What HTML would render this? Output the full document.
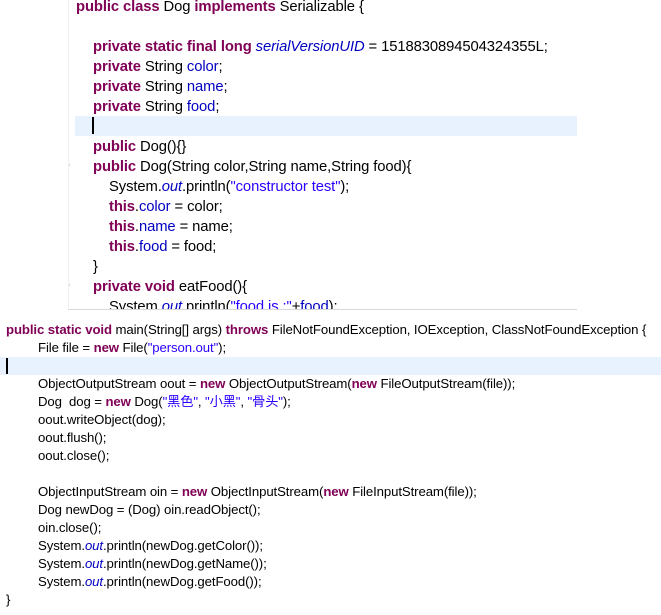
<!DOCTYPE html>
<html><head><meta charset="utf-8"><style>
html,body{margin:0;padding:0;background:#fff;width:661px;height:615px;overflow:hidden;position:relative}
.top{position:absolute;left:68px;top:0;width:508px;height:309px;overflow:hidden;border-left:1px solid #f0f0f0;border-bottom:1px solid #d8d8d8;font-family:"Liberation Sans",sans-serif;font-size:14.8px;letter-spacing:-0.1px;color:#000}
.bot{position:absolute;left:0;top:318px;width:661px;height:297px;font-family:"Liberation Sans","Noto Sans CJK SC",sans-serif;font-size:13.2px;letter-spacing:-0.1px;color:#000}
.l{position:absolute;white-space:pre;line-height:18px}
.k{color:#7f0055;font-weight:bold}
.f{color:#0000c0}
.s{color:#2a00ff}
.i{font-style:italic;color:#0000c0}
.hl{position:absolute;background:#e8f2fe}
.car{position:absolute;width:2px;background:#000}
.m{position:absolute;color:#aab;font-size:10px}
</style></head><body>
<div class="top">
<div class="hl" style="left:6px;top:116px;width:502px;height:20px"></div>
<div class="car" style="left:23px;top:117px;height:17px"></div>
<div class="l" style="left:7px;top:-2px"><span class="k">public class</span> Dog <span class="k">implements</span> Serializable {</div>
<div class="l" style="left:24px;top:38px"><span class="k">private static final long</span> <span class="i">serialVersionUID</span> = 1518830894504324355L;</div>
<div class="l" style="left:24px;top:58px"><span class="k">private</span> String <span class="f">color</span>;</div>
<div class="l" style="left:24px;top:78px"><span class="k">private</span> String <span class="f">name</span>;</div>
<div class="l" style="left:24px;top:98px"><span class="k">private</span> String <span class="f">food</span>;</div>
<div class="l" style="left:24px;top:138px"><span class="k">public</span> Dog(){}</div>
<div class="m" style="left:-2px;top:160px">&#9702;</div>
<div class="l" style="left:24px;top:158px"><span class="k">public</span> Dog(String color,String name,String food){</div>
<div class="l" style="left:40px;top:178px">System.<span class="i">out</span>.println(<span class="s">"constructor test"</span>);</div>
<div class="l" style="left:40px;top:198px"><span class="k">this</span>.<span class="f">color</span> = color;</div>
<div class="l" style="left:40px;top:218px"><span class="k">this</span>.<span class="f">name</span> = name;</div>
<div class="l" style="left:40px;top:238px"><span class="k">this</span>.<span class="f">food</span> = food;</div>
<div class="l" style="left:24px;top:258px">}</div>
<div class="m" style="left:-2px;top:280px">&#9702;</div>
<div class="l" style="left:24px;top:278px"><span class="k">private void</span> eatFood(){</div>
<div class="l" style="left:40px;top:298px">System.<span class="i">out</span>.println(<span class="s">"food is :"</span>+<span class="f">food</span>);</div>
</div>
<div class="bot">
<div class="hl" style="left:0;top:39px;width:661px;height:18px"></div>
<div class="car" style="left:6px;top:40px;height:16px"></div>
<div class="l" style="left:6px;top:3px"><span class="k">public static void</span> main(String[] args) <span class="k">throws</span> FileNotFoundException, IOException, ClassNotFoundException {</div>
<div class="l" style="left:38px;top:21px">File file = <span class="k">new</span> File(<span class="s">"person.out"</span>);</div>
<div class="l" style="left:38px;top:57px">ObjectOutputStream oout = <span class="k">new</span> ObjectOutputStream(<span class="k">new</span> FileOutputStream(file));</div>
<div class="l" style="left:38px;top:75px">Dog&nbsp; dog = <span class="k">new</span> Dog(<span class="s">"黑色"</span>, <span class="s">"小黑"</span>, <span class="s">"骨头"</span>);</div>
<div class="l" style="left:38px;top:93px">oout.writeObject(dog);</div>
<div class="l" style="left:38px;top:111px">oout.flush();</div>
<div class="l" style="left:38px;top:129px">oout.close();</div>
<div class="l" style="left:38px;top:165px">ObjectInputStream oin = <span class="k">new</span> ObjectInputStream(<span class="k">new</span> FileInputStream(file));</div>
<div class="l" style="left:38px;top:183px">Dog newDog = (Dog) oin.readObject();</div>
<div class="l" style="left:38px;top:201px">oin.close();</div>
<div class="l" style="left:38px;top:219px">System.<span class="i">out</span>.println(newDog.getColor());</div>
<div class="l" style="left:38px;top:237px">System.<span class="i">out</span>.println(newDog.getName());</div>
<div class="l" style="left:38px;top:255px">System.<span class="i">out</span>.println(newDog.getFood());</div>
<div class="l" style="left:6px;top:273px">}</div>
</div>
</body></html>
